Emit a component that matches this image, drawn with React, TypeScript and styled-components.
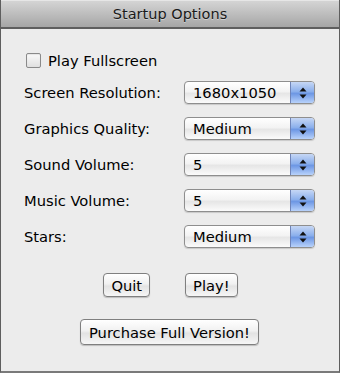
import * as React from 'react';
import styled, { createGlobalStyle } from 'styled-components';

const GlobalStyle = createGlobalStyle`
  html, body {
    margin: 0;
    padding: 0;
    background: #ececec;
  }
  body {
    font-family: "DejaVu Sans", "Liberation Sans", sans-serif;
    color: #000;
  }
`;

const Window = styled.div`
  width: 340px;
  height: 373px;
  box-sizing: border-box;
  display: flex;
  flex-direction: column;
  background: #ececec;
  border: 1px solid #5e5e5e;
  border-top: none;
  border-bottom: 2px solid #7a7a7a;
`;

const TitleBar = styled.div`
  height: 26px;
  flex: none;
  display: flex;
  align-items: center;
  justify-content: center;
  background: linear-gradient(#d4d4d4, #a6a6a6);
  border-top: 1px solid #e6e6e6;
  border-bottom: 2px solid #5f5f5f;
  font-size: 14.5px;
  color: #1a1a1a;
  text-shadow: 0 1px 0 rgba(255, 255, 255, 0.4);
`;

const Body = styled.div`
  display: flex;
  flex-direction: column;
  padding: 23px 24px 0 23px;
`;

const CheckRow = styled.label`
  display: flex;
  align-items: center;
  gap: 7px;
  font-size: 14.7px;
  height: 16px;
  margin-left: 2px;
  margin-bottom: 13px;
`;

const CheckBox = styled.span`
  width: 15px;
  height: 15px;
  box-sizing: border-box;
  border: 1px solid #8a8a8a;
  border-radius: 2px;
  background: linear-gradient(#fafafa, #e0e0e0);
  box-shadow: inset 0 1px 1px rgba(0, 0, 0, 0.08);
`;

const Row = styled.div`
  display: grid;
  grid-template-columns: 1fr 131px;
  align-items: center;
  height: 23px;
  margin-bottom: 13px;
  font-size: 14.7px;
`;

const Select = styled.div`
  display: flex;
  height: 23px;
  box-sizing: border-box;
  border: 1px solid #8e8e8e;
  border-radius: 4px;
  overflow: hidden;
  background: linear-gradient(#ffffff 0%, #f3f3f3 45%, #e6e6e6 55%, #fbfbfb 100%);
  box-shadow: 0 1px 1px rgba(0, 0, 0, 0.15);
`;

const SelectValue = styled.span`
  flex: 1;
  padding-left: 8px;
  line-height: 21px;
  font-size: 14.7px;
`;

const Arrows = styled.span`
  width: 23px;
  display: flex;
  align-items: center;
  justify-content: center;
  border-left: 1px solid #6f84b8;
  background: linear-gradient(#c6d7f5 0%, #8cb0ec 45%, #6d97e4 55%, #b8d2fb 100%);
`;

const ButtonRow = styled.div`
  display: flex;
  justify-content: center;
  gap: 35px;
  margin-top: 12px;
  margin-left: 2px;
`;

const Button = styled.button<{ wide?: boolean }>`
  height: ${({ wide }) => (wide ? '26px' : '24px')};
  padding: 0 ${({ wide }) => (wide ? '8px' : '7px')};
  font-family: inherit;
  font-size: 14.7px;
  color: #000;
  border: 1px solid #7f7f7f;
  border-radius: 4px;
  background: linear-gradient(#ffffff 0%, #f1f1f1 45%, #e3e3e3 55%, #f6f6f6 100%);
  box-shadow: 0 1px 1px rgba(0, 0, 0, 0.2);
`;

const PurchaseRow = styled.div`
  display: flex;
  justify-content: center;
  margin-top: 22px;
  margin-right: 0;
`;

const ArrowIcon = () => (
  <svg width="8" height="14" viewBox="0 0 8 14">
    <path d="M4 1.5 L7.5 5.5 L0.5 5.5 Z" fill="#111" />
    <path d="M4 12.5 L7.5 8.5 L0.5 8.5 Z" fill="#111" />
  </svg>
);

const options: [string, string][] = [
  ['Screen Resolution:', '1680x1050'],
  ['Graphics Quality:', 'Medium'],
  ['Sound Volume:', '5'],
  ['Music Volume:', '5'],
  ['Stars:', 'Medium'],
];

export default function App() {
  return (
    <>
      <GlobalStyle />
      <Window>
        <TitleBar>Startup Options</TitleBar>
        <Body>
          <CheckRow>
            <CheckBox />
            Play Fullscreen
          </CheckRow>
          {options.map(([label, value]) => (
            <Row key={label}>
              <span>{label}</span>
              <Select>
                <SelectValue>{value}</SelectValue>
                <Arrows>
                  <ArrowIcon />
                </Arrows>
              </Select>
            </Row>
          ))}
          <ButtonRow>
            <Button>Quit</Button>
            <Button>Play!</Button>
          </ButtonRow>
          <PurchaseRow>
            <Button wide>Purchase Full Version!</Button>
          </PurchaseRow>
        </Body>
      </Window>
    </>
  );
}
